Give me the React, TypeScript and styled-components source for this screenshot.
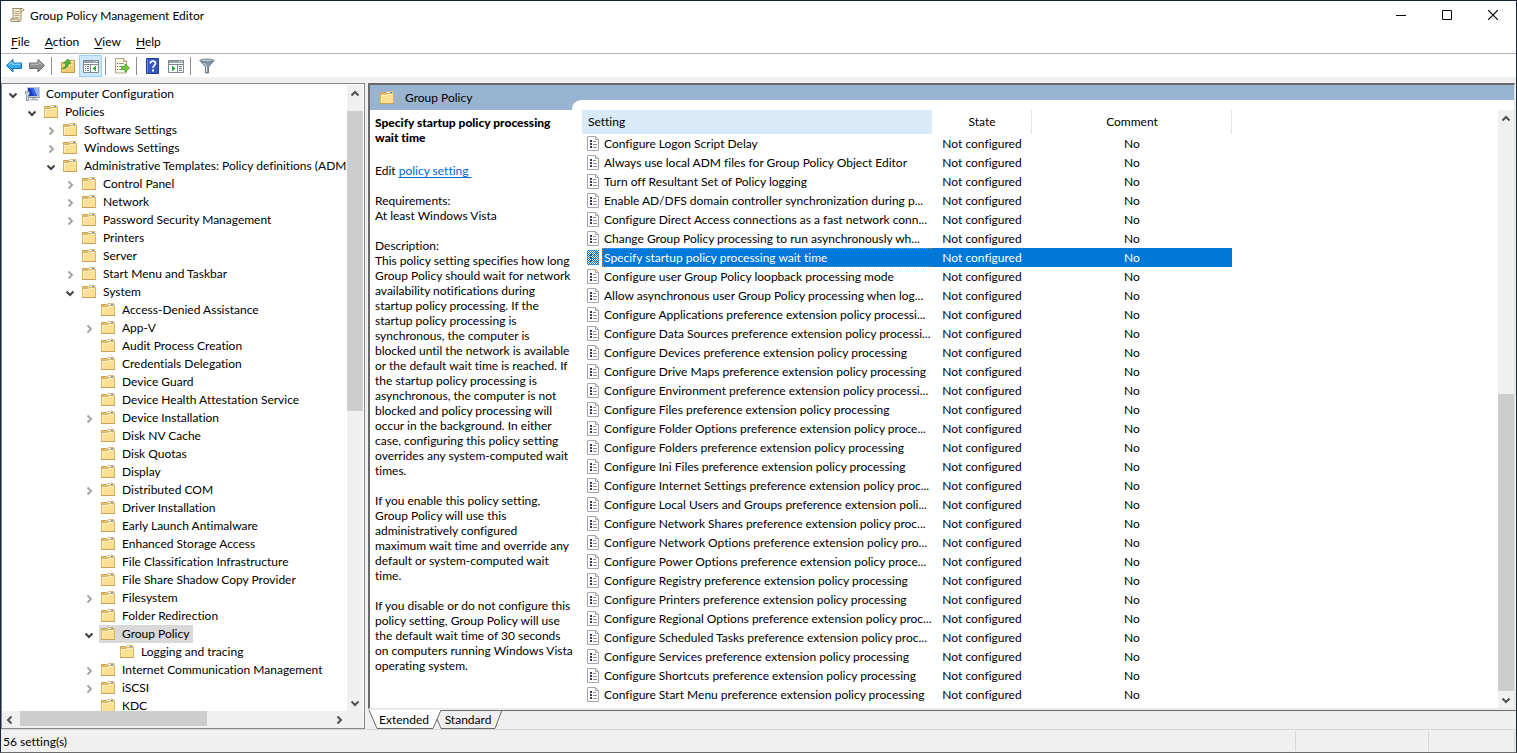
import React from 'react';
import styled, { createGlobalStyle, css } from 'styled-components';

const GlobalStyle = createGlobalStyle`
  *, *::before, *::after { box-sizing: border-box; }
  body { margin: 0; background: #f0f0f0; }
  body, button, table {
    font: 400 12px/15px Lato, "Segoe UI", "Open Sans", sans-serif;
    font-variant-ligatures: none;
    color: #000;
  }
  svg { display: block; flex: none; }
`;

const Window = styled.div`
  display: flex;
  flex-direction: column;
  height: 100vh;
  background: #f0f0f0;
  border: 1px solid #16263a;
  border-bottom-color: #6b6b6b;
  overflow: hidden;
`;

const TitleBar = styled.header`
  display: flex;
  align-items: center;
  height: 30px;
  flex: none;
  padding: 0 0 2px 8px;
  background: #fff;
`;

const Title = styled.h1`
  margin: 0 0 0 5px;
  font-size: 12px;
  font-weight: 400;
  flex: 1;
`;

const CaptionButton = styled.button`
  display: flex;
  align-items: center;
  justify-content: center;
  width: 46px;
  height: 28px;
  margin: 0;
  padding: 0;
  border: 0;
  background: none;
`;

const MenuBar = styled.nav`
  display: flex;
  align-items: center;
  flex: none;
  height: 23px;
  padding: 0 0 2px 10px;
  gap: 15px;
  background: #fff;
  border-bottom: 1px solid #b4b4bb;
`;

const MenuButton = styled.button`
  padding: 0;
  border: 0;
  background: none;

  &::first-letter { text-decoration: underline; text-underline-offset: 2px; }
`;

const ToolBar = styled.div`
  display: flex;
  align-items: center;
  flex: none;
  height: 23px;
  padding-left: 1px;
  background: #fff;
`;

const ToolButton = styled.button<{ $active?: boolean }>`
  display: flex;
  align-items: center;
  justify-content: center;
  width: 23px;
  height: 22px;
  padding: 0;
  border: 1px solid ${p => (p.$active ? '#99d1ff' : 'transparent')};
  background: ${p => (p.$active ? '#cce8ff' : 'none')};
`;

const ToolSeparator = styled.span`
  width: 1px;
  height: 18px;
  margin: 0 4px 0 3px;
  background: #8d8d8d;
`;

const Main = styled.main`
  display: flex;
  flex: 1;
  min-height: 0;
  gap: 3px;
  padding-top: 6px;
`;

const TreePanel = styled.section`
  display: flex;
  flex-direction: column;
  flex: none;
  width: 364px;
  background: #fff;
  border: 1px solid #828790;
`;

const TreeBody = styled.div`
  display: flex;
  flex: 1;
  min-height: 0;
  padding: 1px 1px 0 0;
`;

const TreeList = styled.ul`
  flex: 1;
  min-width: 0;
  margin: 0;
  padding: 0;
  list-style: none;
  overflow: hidden;
`;

const TreeRow = styled.li<{ $level: number }>`
  display: flex;
  align-items: center;
  height: 18px;
  padding-left: ${p => 3 + p.$level * 19}px;
  white-space: nowrap;
`;

const Expander = styled.span`
  display: flex;
  justify-content: center;
  width: 16px;
  margin-right: 2px;
  padding-top: 1px;
  flex: none;
`;

const TreeLabel = styled.span<{ $selected?: boolean }>`
  display: flex;
  align-items: center;
  height: 18px;
  padding: 0 4px 0 1px;
  gap: 6px;
  background: ${p => (p.$selected ? '#d9d9d9' : 'transparent')};
`;

const TreeText = styled.span`
  padding-bottom: 2px;
`;

const ScrollBar = styled.div<{ $horizontal?: boolean }>`
  display: flex;
  flex: none;
  background: #f0f0f0;
  ${p =>
    p.$horizontal
      ? css`height: 17px; padding: 0 17px 2px 0;`
      : css`flex-direction: column; width: 16px;`}
`;

const ScrollButton = styled.button`
  display: flex;
  align-items: center;
  justify-content: center;
  width: 16px;
  height: 17px;
  flex: none;
  padding: 0;
  border: 0;
  background: none;
`;

const ScrollTrack = styled.div<{ $horizontal?: boolean }>`
  display: flex;
  flex: 1;
  min-height: 0;
  flex-direction: ${p => (p.$horizontal ? 'row' : 'column')};
`;

const ScrollGap = styled.span<{ $grow: number }>`
  flex: ${p => p.$grow} 1 0;
`;

const ScrollThumb = styled.span<{ $grow: number }>`
  flex: ${p => p.$grow} 1 0;
  background: #cdcdcd;
`;

const ResultPanel = styled.section`
  display: flex;
  flex-direction: column;
  flex: 1;
  min-width: 0;
`;

const ResultFrame = styled.div`
  display: flex;
  flex-direction: column;
  flex: 1;
  min-height: 0;
  margin: 0 1px 1px 0;
  background: #fff;
  border: 1px solid #e3e3e3;
  border-top: 2px solid #696969;
  border-left: 2px solid #696969;
`;

const ResultHeader = styled.div`
  display: flex;
  height: 25px;
  flex: none;
  background: #99b4d1;
`;

const ResultTitle = styled.div`
  display: flex;
  align-items: center;
  gap: 10px;
  width: 202px;
  padding-left: 9px;
`;

const HeaderCurve = styled.span`
  flex: 1;
  align-self: flex-end;
  height: 10px;
  background: #fff;
  border-top-left-radius: 9px;
`;

const ResultBody = styled.div`
  display: flex;
  flex: 1;
  min-height: 0;
`;

const Details = styled.article`
  width: 212px;
  flex: none;
  padding: 5px 0 0 5px;
  overflow: hidden;
`;

const DetailsTitle = styled.h2`
  margin: 0 0 18px;
  font-size: 12px;
  line-height: 15px;
  font-weight: 900;
`;

const Paragraph = styled.p`
  margin: 0 0 15px;
  white-space: pre;
`;

const PolicyLink = styled.a`
  color: #0066cc;
  text-decoration: underline;
  text-underline-offset: 2px;
  white-space: pre;
`;

const ListArea = styled.div`
  flex: 1;
  min-width: 0;
  overflow: hidden;
`;

const Table = styled.table`
  width: 650px;
  table-layout: fixed;
  border-collapse: collapse;
`;

const HeadCell = styled.th<{ $width: number; $sorted?: boolean }>`
  width: ${p => p.$width}px;
  height: 24px;
  padding: 0 6px 2px;
  font-weight: 400;
  text-align: ${p => (p.$sorted ? 'left' : 'center')};
  background: ${p => (p.$sorted ? '#d9ebf9' : '#fff')};
  box-shadow: inset -1px 0 ${p => (p.$sorted ? '#d9ebf9' : '#e5e5e5')};
`;

const Row = styled.tr<{ $selected?: boolean }>`
  height: 19px;
  color: ${p => (p.$selected ? '#fff' : '#000')};
`;

const Cell = styled.td<{ $selected?: boolean }>`
  padding: 0;
  text-align: center;
  white-space: nowrap;
  background: ${p => (p.$selected ? '#0078d7' : 'transparent')};
`;

const NameCell = styled.td`
  padding: 0 0 0 4px;
`;

const NameContent = styled.div`
  display: flex;
  align-items: center;
  gap: 2px;
  height: 19px;
`;

const Name = styled.span<{ $selected?: boolean }>`
  flex: 1;
  height: 19px;
  padding: 1px 0 1px 1px;
  white-space: nowrap;
  border: 1px ${p => (p.$selected ? 'dotted #c98548' : 'solid transparent')};
  border-right: 0;
  background: ${p => (p.$selected ? '#0078d7' : 'transparent')};
`;

const TabStrip = styled.div`
  display: flex;
  flex: none;
  height: 19px;
`;

const TabButton = styled.button<{ $width: number }>`
  position: relative;
  width: ${p => p.$width}px;
  height: 19px;
  padding: 0 0 0 2px;
  border: 0;
  background: none;
`;

const TabShape = styled.svg`
  position: absolute;
  left: 0;
  top: 0;
  overflow: visible;
`;

const TabText = styled.span`
  position: relative;
`;

const TabRest = styled.span`
  flex: 1;
  border-top: 1px solid #696969;
`;

const StatusBar = styled.footer`
  display: flex;
  flex: none;
  height: 23px;
  padding: 1px 1px 1px 0;
  border-top: 1px solid #d7d7d7;
`;

const StatusCell = styled.span<{ $width?: number }>`
  ${p => (p.$width ? `width: ${p.$width}px;` : 'flex: 1;')}
  padding: 3px 2px;
  border-right: 1px solid #d7d7d7;
`;

function ScrollIcon() {
  return (
    <svg width="16" height="16" viewBox="0 0 16 16">
      <path d="M3.5 1.5h10c1.4 0 1.8 2.6.2 2.8H12v8.2c0 1.4-.6 2-1.6 2H2.8c-1.6 0-2-2.2-.6-2.6H4V4c0-1.300-.3-2.100-.5-2.500z" fill="#f3ead0" stroke="#9a8a66" />
      <path d="M12 4.300c-.9-.4-.8-2.300.6-2.700M2.500 12h7c.3 1 .2 2 1 2.400" stroke="#9a8a66" fill="none" />
      <path d="M5.500 4.500h5M5.500 6.500h5M5.500 8.500h5M5.500 10.500h4" stroke="#b9a77c" />
    </svg>
  );
}

function FolderIcon() {
  return (
    <svg width="16" height="16" viewBox="0 0 16 16">
      <path d="M1.500 13.500v-11h5l1 1.500h7v9.500z" fill="#e8c069" stroke="#c9a258" />
      <path d="M8 1.500h6v3H8z" fill="#fff" stroke="#d8bd84" />
      <path d="M11 2h2v1.500h-2z" fill="#4a90d9" />
      <path d="M1.500 13.500v-9h5.500l1-1h6.500v10z" fill="#fbdf93" stroke="#d9b566" />
      <path d="M2.500 12v-6.500h5l1-1h5" stroke="#fff0bf" fill="none" />
      <path d="M1 13.500h14" stroke="#c9a258" />
    </svg>
  );
}

function ComputerIcon() {
  return (
    <svg width="16" height="16" viewBox="0 0 16 16">
      <path d="M3.500 1.500h12v9h-12z" fill="#1a35c4" stroke="#c3c9d1" />
      <path d="M9 2h6v8h-2z" fill="#8fb2f2" />
      <path d="M6 2h3.500L13 10h-3z" fill="#3560e0" />
      <path d="M3 11.500h13" stroke="#8b929a" />
      <path d="M8 12h4v1h2.500v1.500H6V13h2z" fill="#b4bac0" />
      <path d="M1.500 5v3l1 1v5.500h2V9l1-1V5L4 6.500H3z" stroke="#6a7f94" strokeWidth=".8" fill="#dbe5ee" />
    </svg>
  );
}

function Arrow({ direction }: { direction: 'back' | 'forward' }) {
  const back = direction === 'back';
  const d = back ? 'M.5 7.500 7 1.500V5h8.500v5.500H7V14z' : 'M15.500 7.500 9 1.500V5H.5v5.500H9V14z';
  return (
    <svg width="16" height="16" viewBox="0 0 16 16">
      <path d={d} fill={back ? '#32a8ea' : '#8f8f8f'} stroke={back ? '#1a6fb5' : '#6a6a6a'} />
      <path d={back ? 'M2.500 7 6 4v2.200h8.500' : 'M1.500 6.200H10V4l3 3'} stroke={back ? '#9fe0ff' : '#c9c9c9'} fill="none" />
    </svg>
  );
}

function UpFolderIcon() {
  return (
    <svg width="16" height="16" viewBox="0 0 16 16">
      <path d="M1.500 14.500v-10h7l1-2h5v12z" fill="#f2cc72" stroke="#c39a45" />
      <path d="M10.500 3.500h3" stroke="#fff" />
      <path d="M2.500 7h11" stroke="#fbe6ae" />
      <path d="M2.500 10.500C5 9.800 6 8 5.800 5H3.500L8 1l2.500 4.500L8.300 5C8.500 8.500 6.500 10.800 2.500 10.500z" fill="#55b83a" stroke="#2f8c22" strokeWidth=".8" />
    </svg>
  );
}

function PaneIcon({ side }: { side: 'left' | 'right' }) {
  const left = side === 'left';
  return (
    <svg width="16" height="16" viewBox="0 0 16 16">
      <path d="M.5 2.500h15v12H.5z" fill="#fff" stroke="#7f8790" />
      <path d="M1 3h14v2H1z" fill="#98a1ab" />
      <path d="M11 3.500h1M13 3.500h1" stroke="#fff" />
      <path d="M1 6.500h14" stroke="#7f8790" />
      <path d={left ? 'M7.500 7v7' : 'M9.500 7v7'} stroke="#7f8790" />
      <path d={left ? 'M2 8.500h1M4 8.500h2M2 10.500h1M4 10.500h2M2 12.500h1M4 12.500h2' : 'M11 8.500h3M11 10.500h3M11 12.500h3'} stroke="#6f7a86" />
      <path d={left ? 'M13 7.500v6L9.500 10.500z' : 'M4 7.500v6l3.500-3z'} fill="#2fa526" />
    </svg>
  );
}

function ExportIcon() {
  return (
    <svg width="16" height="16" viewBox="0 0 16 16">
      <path d="M1.500.5h8l3 3v11.500h-11z" fill="#fffbe9" stroke="#b0a37c" />
      <path d="M9.500.5v3h3" fill="#efe5c2" stroke="#b0a37c" />
      <path d="M3 5.500h1M3 8.500h1M3 11.500h1" stroke="#555" />
      <path d="M5 5.500h5M5 8.500h3M5 11.500h3" stroke="#9a9a9a" />
      <path d="M7.500 8.500h3.500V6l4.500 4-4.500 4v-2.500H7.500z" fill="#6fce3c" stroke="#3f9e1f" strokeWidth=".8" />
    </svg>
  );
}

function HelpIcon() {
  return (
    <svg width="16" height="16" viewBox="0 0 16 16">
      <path d="M1.500.5h12v15h-12z" fill="#3558c4" stroke="#203c95" />
      <path d="M2.500 1v14" stroke="#6b8be6" />
      <path d="M5.300 5.500C5.500 2.500 10.500 2.300 10.500 5.300 10.500 7.300 8 7.500 8 10" stroke="#fff" strokeWidth="1.700" fill="none" />
      <path d="M7 11.500h2v2H7z" fill="#fff" />
    </svg>
  );
}

function FilterIcon() {
  return (
    <svg width="16" height="16" viewBox="0 0 16 16">
      <path d="M1 2.500h14L9.500 9v6h-3V9z" fill="#8299ab" stroke="#53687a" strokeWidth=".8" />
      <ellipse cx="8" cy="2.500" rx="7" ry="1.500" fill="#b9c8d3" stroke="#53687a" strokeWidth=".8" />
      <path d="M5 5l2.500 3.500V14" stroke="#dbe6ee" fill="none" />
    </svg>
  );
}

function PolicyIcon({ selected }: { selected?: boolean }) {
  return (
    <svg width="14" height="15" viewBox="0 0 14 15">
      <path d="M1.500.5h8l3 3v11h-11z" fill="#fff" stroke="#a6a6a6" />
      <path d="M9.500.5v3h3" fill="none" stroke="#a6a6a6" />
      <path d="M4 4h2v2H4zM4 7h2v2H4zM4 10h2v2H4z" fill="#3a3a4a" />
      <path d="M7 5.500h3M7 8.500h4M7 11.500h4" stroke="#8a8aa0" />
      {selected && (
        <>
          <pattern id="dither" width="2" height="2" patternUnits="userSpaceOnUse">
            <path d="M0 0h1v1H0zM1 1h1v1H1z" fill="#0078d7" />
          </pattern>
          <path d="M1 0h12v15H1z" fill="url(#dither)" />
        </>
      )}
    </svg>
  );
}

const chevrons = {
  up: 'M1.500 6.500 5 3l3.500 3.500',
  down: 'M1.500 3.500 5 7l3.500-3.500',
  left: 'M6.500 1.500 3 5l3.500 3.500',
  right: 'M3.500 1.500 7 5 3.500 8.500',
};

function Chevron({ to, color = '#505050' }: { to: keyof typeof chevrons; color?: string }) {
  return (
    <svg width="10" height="10" viewBox="0 0 10 10">
      <path d={chevrons[to]} stroke={color} strokeWidth="2" fill="none" />
    </svg>
  );
}

type Node = { level: number; text: string; state?: 'open' | 'closed'; selected?: boolean };

const n = (level: number, text: string, state?: 'open' | 'closed', selected?: boolean): Node => ({ level, text, state, selected });

const tree: Node[] = [
  n(0, 'Computer Configuration', 'open'),
  n(1, 'Policies', 'open'),
  n(2, 'Software Settings', 'closed'),
  n(2, 'Windows Settings', 'closed'),
  n(2, 'Administrative Templates: Policy definitions (ADM', 'open'),
  n(3, 'Control Panel', 'closed'),
  n(3, 'Network', 'closed'),
  n(3, 'Password Security Management', 'closed'),
  n(3, 'Printers'),
  n(3, 'Server'),
  n(3, 'Start Menu and Taskbar', 'closed'),
  n(3, 'System', 'open'),
  n(4, 'Access-Denied Assistance'),
  n(4, 'App-V', 'closed'),
  n(4, 'Audit Process Creation'),
  n(4, 'Credentials Delegation'),
  n(4, 'Device Guard'),
  n(4, 'Device Health Attestation Service'),
  n(4, 'Device Installation', 'closed'),
  n(4, 'Disk NV Cache'),
  n(4, 'Disk Quotas'),
  n(4, 'Display'),
  n(4, 'Distributed COM', 'closed'),
  n(4, 'Driver Installation'),
  n(4, 'Early Launch Antimalware'),
  n(4, 'Enhanced Storage Access'),
  n(4, 'File Classification Infrastructure'),
  n(4, 'File Share Shadow Copy Provider'),
  n(4, 'Filesystem', 'closed'),
  n(4, 'Folder Redirection'),
  n(4, 'Group Policy', 'open', true),
  n(5, 'Logging and tracing'),
  n(4, 'Internet Communication Management', 'closed'),
  n(4, 'iSCSI', 'closed'),
  n(4, 'KDC'),
];

const settings = [
  'Configure Logon Script Delay',
  'Always use local ADM files for Group Policy Object Editor',
  'Turn off Resultant Set of Policy logging',
  'Enable AD/DFS domain controller synchronization during p...',
  'Configure Direct Access connections as a fast network conn...',
  'Change Group Policy processing to run asynchronously wh...',
  'Specify startup policy processing wait time',
  'Configure user Group Policy loopback processing mode',
  'Allow asynchronous user Group Policy processing when log...',
  'Configure Applications preference extension policy processi...',
  'Configure Data Sources preference extension policy processi...',
  'Configure Devices preference extension policy processing',
  'Configure Drive Maps preference extension policy processing',
  'Configure Environment preference extension policy processi...',
  'Configure Files preference extension policy processing',
  'Configure Folder Options preference extension policy proce...',
  'Configure Folders preference extension policy processing',
  'Configure Ini Files preference extension policy processing',
  'Configure Internet Settings preference extension policy proc...',
  'Configure Local Users and Groups preference extension poli...',
  'Configure Network Shares preference extension policy proc...',
  'Configure Network Options preference extension policy pro...',
  'Configure Power Options preference extension policy proce...',
  'Configure Registry preference extension policy processing',
  'Configure Printers preference extension policy processing',
  'Configure Regional Options preference extension policy proc...',
  'Configure Scheduled Tasks preference extension policy proc...',
  'Configure Services preference extension policy processing',
  'Configure Shortcuts preference extension policy processing',
  'Configure Start Menu preference extension policy processing',
];
const selectedSetting = 6;

const description = `Description:
This policy setting specifies how long
Group Policy should wait for network
availability notifications during
startup policy processing. If the
startup policy processing is
synchronous, the computer is
blocked until the network is available
or the default wait time is reached. If
the startup policy processing is
asynchronous, the computer is not
blocked and policy processing will
occur in the background. In either
case, configuring this policy setting
overrides any system-computed wait
times.`;

const enabledText = `If you enable this policy setting,
Group Policy will use this
administratively configured
maximum wait time and override any
default or system-computed wait
time.`;

const disabledText = `If you disable or do not configure this
policy setting, Group Policy will use
the default wait time of 30 seconds
on computers running Windows Vista
operating system.`;

export default function App() {
  return (
    <>
      <GlobalStyle />
      <Window>
        <TitleBar>
          <ScrollIcon />
          <Title>Group Policy Management Editor</Title>
          <CaptionButton aria-label="Minimize">
            <svg width="10" height="10"><path d="M0 5.500h10" stroke="#000" /></svg>
          </CaptionButton>
          <CaptionButton aria-label="Maximize">
            <svg width="10" height="10"><path d="M.5.5h9v9h-9z" stroke="#000" fill="none" /></svg>
          </CaptionButton>
          <CaptionButton aria-label="Close">
            <svg width="10" height="10"><path d="M0 0l10 10M10 0L0 10" stroke="#000" strokeWidth="1.200" /></svg>
          </CaptionButton>
        </TitleBar>
        <MenuBar>
          {['File', 'Action', 'View', 'Help'].map(item => (
            <MenuButton key={item}>{item}</MenuButton>
          ))}
        </MenuBar>
        <ToolBar>
          <ToolButton aria-label="Back"><Arrow direction="back" /></ToolButton>
          <ToolButton aria-label="Forward"><Arrow direction="forward" /></ToolButton>
          <ToolSeparator />
          <ToolButton aria-label="Up one level"><UpFolderIcon /></ToolButton>
          <ToolButton aria-label="Show console tree" $active><PaneIcon side="left" /></ToolButton>
          <ToolSeparator />
          <ToolButton aria-label="Export list"><ExportIcon /></ToolButton>
          <ToolSeparator />
          <ToolButton aria-label="Help"><HelpIcon /></ToolButton>
          <ToolButton aria-label="Show action pane"><PaneIcon side="right" /></ToolButton>
          <ToolSeparator />
          <ToolButton aria-label="Filter"><FilterIcon /></ToolButton>
        </ToolBar>
        <Main>
          <TreePanel>
            <TreeBody>
              <TreeList>
                {tree.map(node => (
                  <TreeRow key={node.text} $level={node.level}>
                    <Expander>
                      {node.state === 'open' && <Chevron to="down" color="#404040" />}
                      {node.state === 'closed' && <Chevron to="right" color="#a6a6a6" />}
                    </Expander>
                    <TreeLabel $selected={node.selected}>
                      {node.level === 0 ? <ComputerIcon /> : <FolderIcon />}
                      <TreeText>{node.text}</TreeText>
                    </TreeLabel>
                  </TreeRow>
                ))}
              </TreeList>
              <ScrollBar>
                <ScrollButton aria-label="Scroll up"><Chevron to="up" /></ScrollButton>
                <ScrollTrack>
                  <ScrollGap $grow={9} />
                  <ScrollThumb $grow={300} />
                  <ScrollGap $grow={283} />
                </ScrollTrack>
                <ScrollButton aria-label="Scroll down"><Chevron to="down" /></ScrollButton>
              </ScrollBar>
            </TreeBody>
            <ScrollBar $horizontal>
              <ScrollButton aria-label="Scroll left"><Chevron to="left" /></ScrollButton>
              <ScrollTrack $horizontal>
                <ScrollGap $grow={2} />
                <ScrollThumb $grow={187} />
                <ScrollGap $grow={124} />
              </ScrollTrack>
              <ScrollButton aria-label="Scroll right"><Chevron to="right" /></ScrollButton>
            </ScrollBar>
          </TreePanel>
          <ResultPanel>
            <ResultFrame>
              <ResultHeader>
                <ResultTitle><FolderIcon />Group Policy</ResultTitle>
                <HeaderCurve />
              </ResultHeader>
              <ResultBody>
                <Details>
                  <DetailsTitle>Specify startup policy processing<br />wait time</DetailsTitle>
                  <Paragraph>Edit <PolicyLink href="#policy">policy setting </PolicyLink></Paragraph>
                  <Paragraph>{'Requirements:\nAt least Windows Vista'}</Paragraph>
                  <Paragraph>{description}</Paragraph>
                  <Paragraph>{enabledText}</Paragraph>
                  <Paragraph>{disabledText}</Paragraph>
                </Details>
                <ListArea>
                  <Table>
                    <thead>
                      <tr>
                        <HeadCell scope="col" $width={350} $sorted>Setting</HeadCell>
                        <HeadCell scope="col" $width={100}>State</HeadCell>
                        <HeadCell scope="col" $width={200}>Comment</HeadCell>
                      </tr>
                    </thead>
                    <tbody>
                      {settings.map((name, i) => {
                        const selected = i === selectedSetting;
                        return (
                          <Row key={name} $selected={selected}>
                            <NameCell>
                              <NameContent>
                                <PolicyIcon selected={selected} />
                                <Name $selected={selected}>{name}</Name>
                              </NameContent>
                            </NameCell>
                            <Cell $selected={selected}>Not configured</Cell>
                            <Cell $selected={selected}>No</Cell>
                          </Row>
                        );
                      })}
                    </tbody>
                  </Table>
                </ListArea>
                <ScrollBar>
                  <ScrollButton aria-label="Scroll up"><Chevron to="up" /></ScrollButton>
                  <ScrollTrack>
                    <ScrollGap $grow={267} />
                    <ScrollThumb $grow={297} />
                  </ScrollTrack>
                  <ScrollButton aria-label="Scroll down"><Chevron to="down" /></ScrollButton>
                </ScrollBar>
              </ResultBody>
            </ResultFrame>
            <TabStrip>
              <TabButton $width={70}>
                <TabShape width="70" height="19">
                  <path d="M1 0l8 18.500h56L73 0z" fill="#fff" />
                  <path d="M1 0l8 18.500h56L73 0" fill="none" stroke="#696969" />
                </TabShape>
                <TabText>Extended</TabText>
              </TabButton>
              <TabButton $width={58}>
                <TabShape width="58" height="19">
                  <path d="M3 .5h61" stroke="#696969" />
                  <path d="M-1 9l4 9.500h54L64 0" fill="none" stroke="#696969" />
                </TabShape>
                <TabText>Standard</TabText>
              </TabButton>
              <TabRest />
            </TabStrip>
          </ResultPanel>
        </Main>
        <StatusBar>
          <StatusCell>56 setting(s)</StatusCell>
          <StatusCell $width={133}></StatusCell>
          <StatusCell $width={86}></StatusCell>
        </StatusBar>
      </Window>
    </>
  );
}
